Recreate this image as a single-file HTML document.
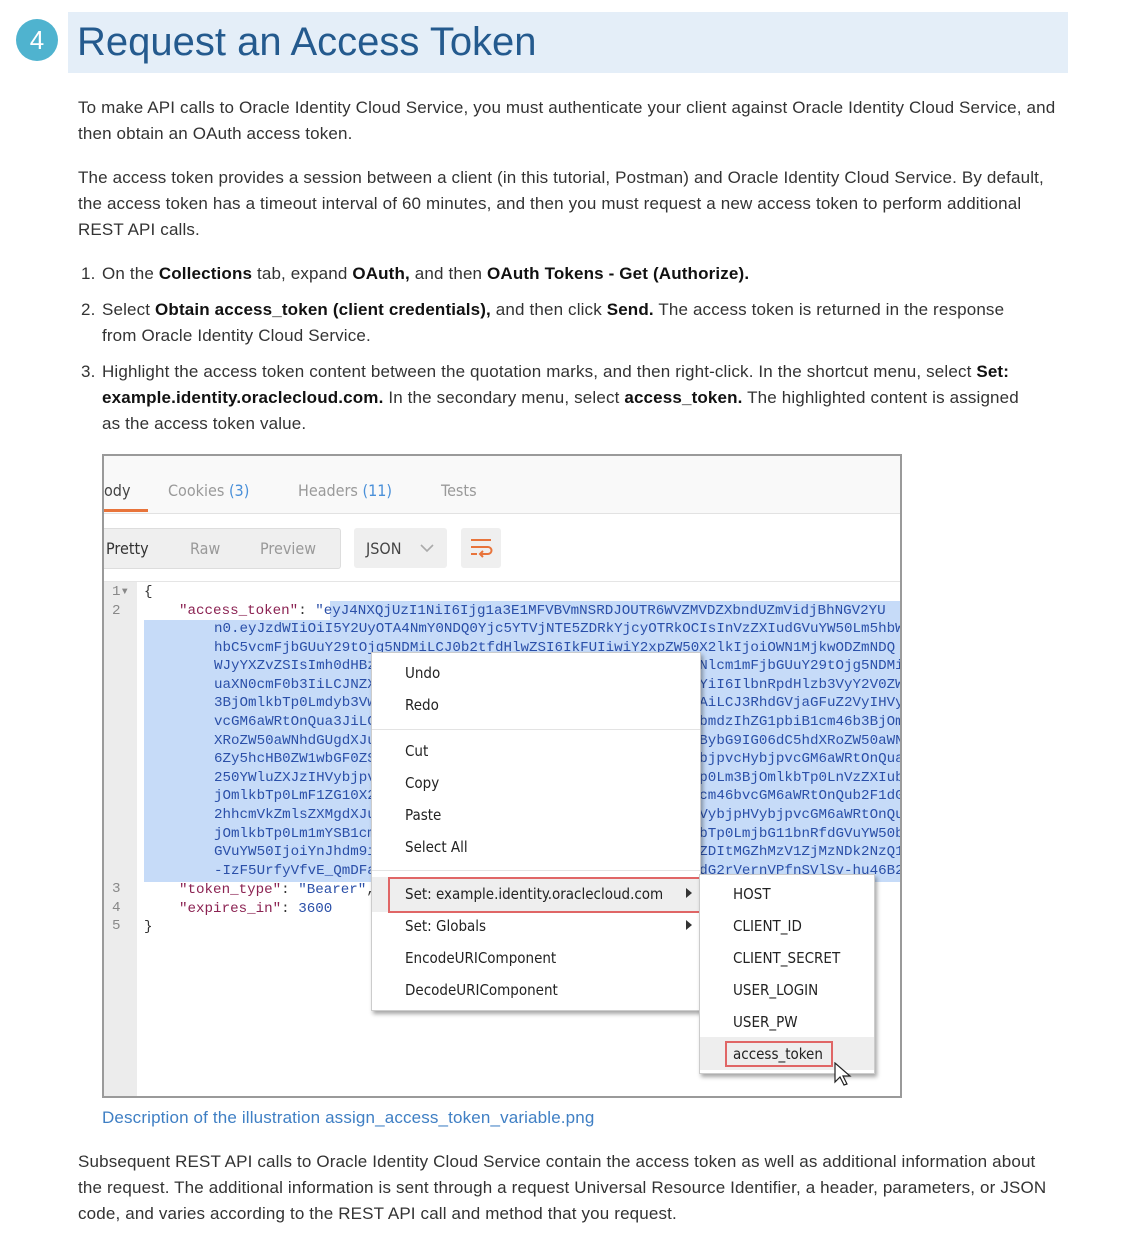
<!DOCTYPE html>
<html><head><meta charset="utf-8">
<style>
body{margin:0;background:#fff;width:1126px;height:1240px;position:relative;overflow:hidden;font-family:"Liberation Sans",Arial,sans-serif;color:#333}
.a{position:absolute}
p{margin:0}
.txt{font-size:17px;line-height:26px;letter-spacing:0.15px;white-space:nowrap}
b{color:#111}
.code{font-family:"Liberation Mono",monospace;font-size:14.2px;white-space:pre;line-height:18.6px;color:#2a4fa8}
.ui{font-family:"DejaVu Sans Condensed","Liberation Sans",sans-serif}
.mi{position:absolute;left:33px;font-size:15px;color:#222}
</style></head><body>
<div class="a" style="left:16px;top:19px;width:42px;height:42px;border-radius:50%;background:#4fb3cf;color:#fff;font-size:26px;line-height:42px;text-align:center">4</div>
<div class="a" style="left:68px;top:12px;width:1000px;height:61px;background:#e4eef8"></div>
<div class="a" style="left:77px;top:16px;font-size:40px;line-height:52px;color:#245a8e;letter-spacing:0px">Request an Access Token</div>

<div class="a txt" style="left:78px;top:95px">To make API calls to Oracle Identity Cloud Service, you must authenticate your client against Oracle Identity Cloud Service, and<br>then obtain an OAuth access token.</div>
<div class="a txt" style="left:78px;top:165px">The access token provides a session between a client (in this tutorial, Postman) and Oracle Identity Cloud Service. By default,<br>the access token has a timeout interval of 60 minutes, and then you must request a new access token to perform additional<br>REST API calls.</div>
<div class="a txt" style="left:81px;top:261px">1.</div>
<div class="a txt" style="left:102px;top:261px">On the <b>Collections</b> tab, expand <b>OAuth,</b> and then <b>OAuth Tokens - Get (Authorize).</b></div>
<div class="a txt" style="left:81px;top:297px">2.</div>
<div class="a txt" style="left:102px;top:297px">Select <b>Obtain access_token (client credentials),</b> and then click <b>Send.</b> The access token is returned in the response<br>from Oracle Identity Cloud Service.</div>
<div class="a txt" style="left:81px;top:359px">3.</div>
<div class="a txt" style="left:102px;top:359px">Highlight the access token content between the quotation marks, and then right-click. In the shortcut menu, select <b>Set:</b><br><b>example.identity.oraclecloud.com.</b> In the secondary menu, select <b>access_token.</b> The highlighted content is assigned<br>as the access token value.</div>

<!-- screenshot -->
<div class="a ui" style="left:102px;top:454px;width:796px;height:640px;border:2px solid #9a9a9a;overflow:hidden;background:#fff">
 <div class="a" style="left:0;top:0;width:796px;height:57px;background:#f9f9f9;border-bottom:1px solid #e2e2e2"></div>
 <div class="a" style="left:0;top:25px;font-size:16px;color:#444">ody</div>
 <div class="a" style="left:0;top:53px;width:44px;height:3px;background:#e8743b"></div>
 <div class="a" style="left:64px;top:25px;font-size:16px;color:#9a9a9a">Cookies <span style="color:#4a90d9">(3)</span></div>
 <div class="a" style="left:194px;top:25px;font-size:16px;color:#9a9a9a">Headers <span style="color:#4a90d9">(11)</span></div>
 <div class="a" style="left:337px;top:25px;font-size:16px;color:#9a9a9a">Tests</div>
 <div class="a" style="left:0;top:72px;width:236px;height:39px;background:#efefef;border:1px solid #ddd;border-left:none;border-radius:0 3px 3px 0"></div>
 <div class="a" style="left:2px;top:83px;font-size:16px;color:#333">Pretty</div>
 <div class="a" style="left:86px;top:83px;font-size:16px;color:#999">Raw</div>
 <div class="a" style="left:156px;top:83px;font-size:16px;color:#999">Preview</div>
 <div class="a" style="left:250px;top:72px;width:93px;height:40px;background:#efefef;border-radius:3px"></div>
 <div class="a" style="left:262px;top:83px;font-size:16px;color:#444">JSON</div>
 <svg class="a" style="left:315px;top:86px" width="16" height="12"><path d="M2 3l6 6 6-6" stroke="#aaa" stroke-width="1.6" fill="none"/></svg>
 <div class="a" style="left:357px;top:72px;width:40px;height:40px;background:#efefef;border-radius:3px"></div>
 <svg class="a" style="left:366px;top:81px" width="24" height="22"><path d="M1 3h20M1 10h17a3.5 3.5 0 0 1 0 7h-7M13 14l-3 3 3 3M1 17h6" stroke="#e8743b" stroke-width="2" fill="none"/></svg>
 <div class="a" style="left:0;top:125px;width:796px;height:1px;background:#e5e5e5"></div>
 <div class="a" style="left:0;top:126px;width:33px;height:520px;background:#ececec"></div>
 <div class="a" style="left:40px;top:164px;width:756px;height:262px;background:#c6dbf8"></div>
 <div class="a" style="left:226px;top:145px;width:570px;height:19px;background:#c6dbf8"></div>
 <div class="a code" style="left:8px;top:127px;color:#888">1▾
2</div>
 <div class="a code" style="left:8px;top:424px;color:#888">3
4
5</div>
 <div class="a code" style="left:40px;top:127px;color:#333">{</div>
 <div class="a code" style="left:75px;top:146px"><span style="color:#8b2252">"access_token"</span><span style="color:#333">: </span><span style="color:#2a4fa8">"eyJ4NXQjUzI1NiI6Ijg1a3E1MFVBVmNSRDJOUTR6WVZMVDZXbndUZmVidjBhNGV2YU</span></div>
 <div class="a code" style="left:110px;top:164px">n0.eyJzdWIiOiI5Y2UyOTA4NmY0NDQ0Yjc5YTVjNTE5ZDRkYjcyOTRkOCIsInVzZXIudGVuYW50Lm5hbWUi
hbC5vcmFjbGUuY29tOjg5NDMiLCJ0b2tfdHlwZSI6IkFUIiwiY2xpZW50X2lkIjoiOWN1MjkwODZmNDQ
WJyYXZvZSIsImh0dHBzOi8vaWRjcy1vcmFjbGUuY29tOjg5NDMiXSwidXNlcm1mFjbGUuY29tOjg5NDMiXSw
uaXN0cmF0b3IiLCJNZXRhZ2RhdGEiLCJpZGNzLWFwcC5hZG1pbiIsInN1YiI6IlbnRpdHlzb3VyY2V0ZW1wb
3BjOmlkbTp0Lmdyb3VwLnJlYWRvbmx5IiwidXJuOm9wYzppZG06dC5hcHAiLCJ3RhdGVjaGFuZ2VyIHVybjp
vcGM6aWRtOnQua3JiLCJ1cm46b3BjOmlkbTp0LnNlY3VyaXR5LnNldHRpbmdzIhZG1pbiB1cm46b3BjOmlkb
XRoZW50aWNhdGUgdXJuOm9wYzppZG06dC5pZGVudGl0eS5wcm92aWRlciBybG9IG06dC5hdXRoZW50aWNhdG
6Zy5hcHB0ZW1wbGF0ZSB1cm46b3BjOmlkbTp0LmRpYWdub3N0aWNzIHVybjpvcHybjpvcGM6aWRtOnQuam9iL
250YWluZXJzIHVybjpvcGM6aWRtOnQuc2NoZW1hcyB1cm46b3BjOmlkbTp0Lm3BjOmlkbTp0LnVzZXIubWU
jOmlkbTp0LmF1ZG10X2V2ZW50cyB1cm46b3BjOmlkbTp0Lmdyb3VwcyB1cm46bvcGM6aWRtOnQub2F1dGhjb
2hhcmVkZmlsZXMgdXJuOm9wYzppZG06dC5zZWxmcmVnaXN0cmF0aW9uIHVybjpHVybjpvcGM6aWRtOnQudXN
jOmlkbTp0Lm1mYSB1cm46b3BjOmlkbTp0LnBvbGljeSB1cm46b3BjOmlkbTp0LmjbG11bnRfdGVuYW50bmFtZ
GVuYW50IjoiYnJhdm9iIiwiZXhwIjoxNDk2ODA1NjY2fQ.tJfYTgyMTg2ZDItMGZhMzV1ZjMzNDk2NzQ1Yz
-IzF5UrfyVfvE_QmDFaZ3hT9kLm2Q4rTtYp0Wz1nX6vB2eJ8cR5sK7uA3dG2rVernVPfnSVlSv-hu46B2</div>
 <div class="a code" style="left:75px;top:425px"><span style="color:#8b2252">"token_type"</span><span style="color:#333">: </span>"Bearer"<span style="color:#333">,</span>
<span style="color:#8b2252">"expires_in"</span><span style="color:#333">: </span>3600</div>
 <div class="a code" style="left:40px;top:462px;color:#333">}</div>

 <!-- context menu -->
 <div class="a" style="left:267px;top:196px;width:328px;height:357px;background:#fff;border:1px solid #ccc;box-shadow:2px 3px 4px rgba(0,0,0,.35)">
  <div class="mi" style="top:11px">Undo</div>
  <div class="mi" style="top:43px">Redo</div>
  <div class="a" style="left:0;top:76px;width:328px;height:1px;background:#e3e3e3"></div>
  <div class="mi" style="top:89px">Cut</div>
  <div class="mi" style="top:121px">Copy</div>
  <div class="mi" style="top:153px">Paste</div>
  <div class="mi" style="top:185px">Select All</div>
  <div class="a" style="left:0;top:217px;width:328px;height:1px;background:#e3e3e3"></div>
  <div class="a" style="left:0;top:224px;width:328px;height:35px;background:#eee"></div>
  <div class="a" style="left:16px;top:224px;width:309px;height:32px;border:2px solid #e06666"></div>
  <div class="mi" style="top:232px">Set: example.identity.oraclecloud.com</div>
  <div class="a" style="left:314px;top:235px;width:0;height:0;border-left:6px solid #333;border-top:5px solid transparent;border-bottom:5px solid transparent"></div>
  <div class="mi" style="top:264px">Set: Globals</div>
  <div class="a" style="left:314px;top:267px;width:0;height:0;border-left:6px solid #333;border-top:5px solid transparent;border-bottom:5px solid transparent"></div>
  <div class="mi" style="top:296px">EncodeURIComponent</div>
  <div class="mi" style="top:328px">DecodeURIComponent</div>
 </div>
 <!-- submenu -->
 <div class="a" style="left:595px;top:418px;width:174px;height:198px;background:#fff;border:1px solid #ccc;box-shadow:2px 3px 4px rgba(0,0,0,.35)">
  <div class="a" style="left:0;top:162px;width:174px;height:33px;background:#eee"></div>
  <div class="mi" style="top:10px">HOST</div>
  <div class="mi" style="top:42px">CLIENT_ID</div>
  <div class="mi" style="top:74px">CLIENT_SECRET</div>
  <div class="mi" style="top:106px">USER_LOGIN</div>
  <div class="mi" style="top:138px">USER_PW</div>
  <div class="a" style="left:25px;top:166px;width:104px;height:22px;border:2px solid #e06666"></div>
  <div class="mi" style="top:170px">access_token</div>
 </div>
 <svg class="a" style="left:730px;top:606px" width="18" height="26"><path d="M1 1v19l5-5 4 8 3-1-4-8h7z" fill="#fff" stroke="#222" stroke-width="1.2"/></svg>
</div>

<div class="a" style="left:102px;top:1105px;font-size:17px;line-height:26px;color:#3f7fc4;letter-spacing:0.15px">Description of the illustration assign_access_token_variable.png</div>
<div class="a txt" style="left:78px;top:1149px">Subsequent REST API calls to Oracle Identity Cloud Service contain the access token as well as additional information about<br>the request. The additional information is sent through a request Universal Resource Identifier, a header, parameters, or JSON<br>code, and varies according to the REST API call and method that you request.</div>
</body></html>
